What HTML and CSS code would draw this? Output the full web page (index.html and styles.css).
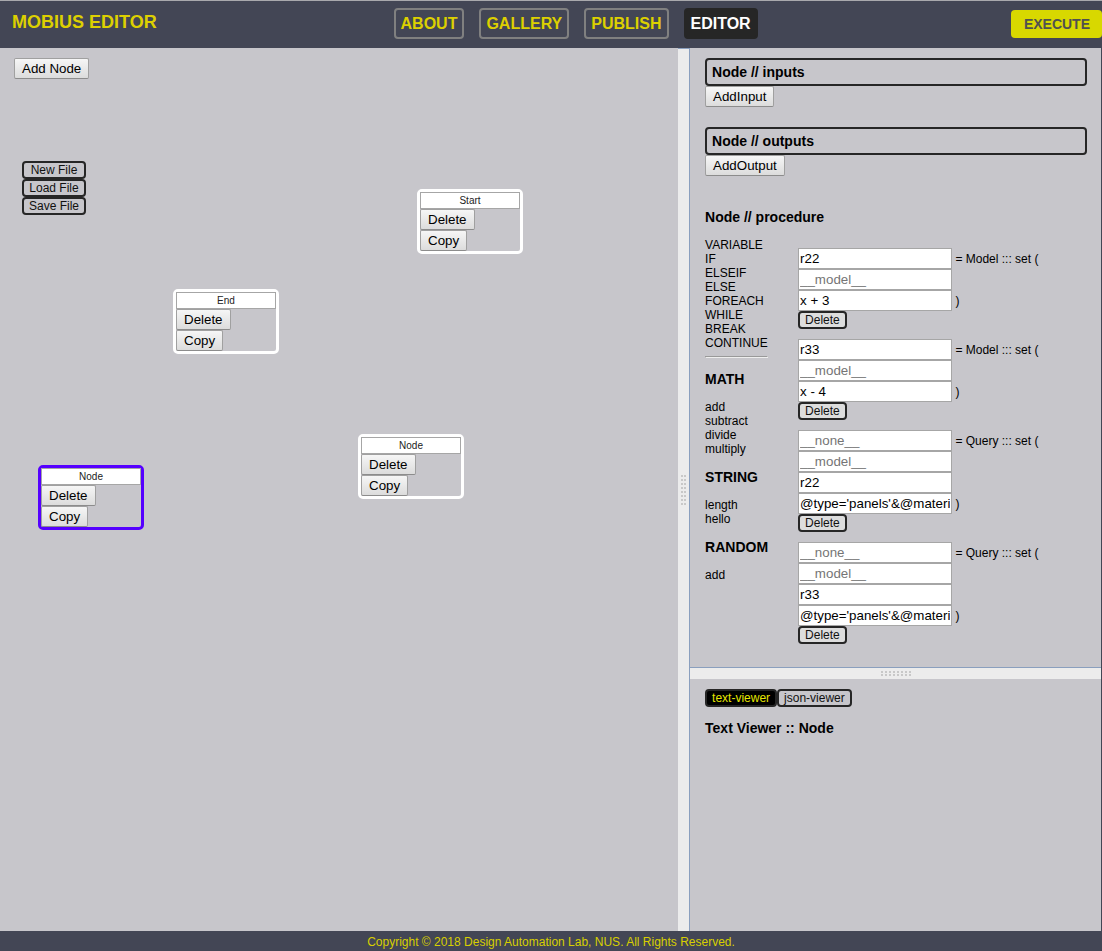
FILE: index.html
```html
<!DOCTYPE html>
<html lang="en">
<head>
<meta charset="utf-8">
<title>Mobius Editor</title>
<link rel="stylesheet" href="styles.css">
</head>
<body>
<header class="topbar">
  <h1 class="brand">MOBIUS EDITOR</h1>
  <nav class="nav">
    <a class="nav-link" href="#about">ABOUT</a>
    <a class="nav-link" href="#gallery">GALLERY</a>
    <a class="nav-link" href="#publish">PUBLISH</a>
    <a class="nav-link active" href="#editor" aria-current="page">EDITOR</a>
  </nav>
  <button class="execute" type="button">EXECUTE</button>
</header>

<main class="workspace">
  <section class="canvas" aria-label="Flowchart">
    <button class="btn" type="button">Add Node</button>
    <div class="file-menu">
      <button class="btn-outline" type="button">New File</button>
      <button class="btn-outline" type="button">Load File</button>
      <button class="btn-outline" type="button">Save File</button>
    </div>
    <article class="node node-start">
      <input class="node-name" type="text" value="Start" aria-label="Node name">
      <button class="btn" type="button">Delete</button>
      <button class="btn" type="button">Copy</button>
    </article>
    <article class="node node-end">
      <input class="node-name" type="text" value="End" aria-label="Node name">
      <button class="btn" type="button">Delete</button>
      <button class="btn" type="button">Copy</button>
    </article>
    <article class="node node-middle">
      <input class="node-name" type="text" value="Node" aria-label="Node name">
      <button class="btn" type="button">Delete</button>
      <button class="btn" type="button">Copy</button>
    </article>
    <article class="node node-selected">
      <input class="node-name" type="text" value="Node" aria-label="Node name">
      <button class="btn" type="button">Delete</button>
      <button class="btn" type="button">Copy</button>
    </article>
  </section>

  <div class="gutter gutter-vertical" role="separator" aria-orientation="vertical">
    <svg width="5" height="30" viewBox="0 0 5 30" aria-hidden="true">
      <path class="grip" d="M0 1H2M3 1H5M0 5H2M3 5H5M0 9H2M3 9H5M0 13H2M3 13H5M0 17H2M3 17H5M0 21H2M3 21H5M0 25H2M3 25H5M0 29H2M3 29H5"/>
    </svg>
  </div>

  <div class="side">
    <section class="panel">
      <h2 class="heading boxed">Node // inputs</h2>
      <button class="btn" type="button">AddInput</button>
      <h2 class="heading boxed outputs">Node // outputs</h2>
      <button class="btn" type="button">AddOutput</button>
      <h2 class="heading procedure-title">Node // procedure</h2>
      <div class="procedure">
        <div class="toolbox">
          <ul class="list">
            <li>VARIABLE</li><li>IF</li><li>ELSEIF</li><li>ELSE</li>
            <li>FOREACH</li><li>WHILE</li><li>BREAK</li><li>CONTINUE</li>
          </ul>
          <hr class="rule">
          <h3 class="heading group">MATH</h3>
          <ul class="list"><li>add</li><li>subtract</li><li>divide</li><li>multiply</li></ul>
          <h3 class="heading group">STRING</h3>
          <ul class="list"><li>length</li><li>hello</li></ul>
          <h3 class="heading group">RANDOM</h3>
          <ul class="list"><li>add</li></ul>
        </div>
        <div class="steps">
          <div class="step">
            <label class="row"><input class="field" type="text" value="r22"> = Model ::: set (</label>
            <input class="field" type="text" placeholder="__model__" aria-label="Model">
            <label class="row"><input class="field" type="text" value="x + 3"> )</label>
            <button class="btn-outline filled" type="button">Delete</button>
          </div>
          <div class="step">
            <label class="row"><input class="field" type="text" value="r33"> = Model ::: set (</label>
            <input class="field" type="text" placeholder="__model__" aria-label="Model">
            <label class="row"><input class="field" type="text" value="x - 4"> )</label>
            <button class="btn-outline filled" type="button">Delete</button>
          </div>
          <div class="step">
            <label class="row"><input class="field" type="text" placeholder="__none__"> = Query ::: set (</label>
            <input class="field" type="text" placeholder="__model__" aria-label="Model">
            <input class="field" type="text" value="r22" aria-label="Source">
            <label class="row"><input class="field" type="text" value="@type='panels'&amp;@material"> )</label>
            <button class="btn-outline filled" type="button">Delete</button>
          </div>
          <div class="step">
            <label class="row"><input class="field" type="text" placeholder="__none__"> = Query ::: set (</label>
            <input class="field" type="text" placeholder="__model__" aria-label="Model">
            <input class="field" type="text" value="r33" aria-label="Source">
            <label class="row"><input class="field" type="text" value="@type='panels'&amp;@material"> )</label>
            <button class="btn-outline filled" type="button">Delete</button>
          </div>
        </div>
      </div>
    </section>

    <div class="gutter gutter-horizontal" role="separator" aria-orientation="horizontal">
      <svg width="30" height="5" viewBox="0 0 30 5" aria-hidden="true">
        <path class="grip" d="M1 0V2M1 3V5M5 0V2M5 3V5M9 0V2M9 3V5M13 0V2M13 3V5M17 0V2M17 3V5M21 0V2M21 3V5M25 0V2M25 3V5M29 0V2M29 3V5"/>
      </svg>
    </div>

    <section class="panel">
      <div class="tabs">
        <button class="btn-outline selected" type="button">text-viewer</button>
        <button class="btn-outline" type="button">json-viewer</button>
      </div>
      <h2 class="heading viewer-title">Text Viewer :: Node</h2>
    </section>
  </div>
</main>

<footer class="footer">Copyright © 2018 Design Automation Lab, NUS. All Rights Reserved.</footer>
</body>
</html>
```

FILE: styles.css
```css
* {
  box-sizing: border-box;
}

body {
  margin: 0;
  min-height: 100vh;
  display: flex;
  flex-direction: column;
  background: #434655;
  color: #000;
  font-family: "Liberation Sans", Arial, sans-serif;
  font-size: 12px;
  line-height: 14px;
}

button,
input {
  font-family: inherit;
  margin: 0;
}

/* Header */
.topbar {
  display: grid;
  grid-template-columns: 8fr auto 7fr;
  align-items: center;
  height: 48px;
  padding-bottom: 2px;
  border-top: 1px solid #a9a9ad;
}

.brand {
  margin: 0;
  padding: 0 12px 3px;
  font-size: 18px;
  line-height: 20px;
  color: #ddd000;
}

.nav {
  display: flex;
  gap: 15px;
}

.nav-link {
  padding: 4px 5px;
  border: 2px solid #808080;
  border-radius: 4px;
  font-size: 16px;
  font-weight: bold;
  line-height: 19px;
  color: #ddd000;
  text-decoration: none;
}

.nav-link.active {
  border-color: #262626;
  background: #262626;
  color: #fff;
}

.execute {
  justify-self: end;
  height: 28px;
  padding: 0 12px 0 13px;
  border: 0;
  border-radius: 4px;
  background: #d8d800;
  color: #505050;
  font-size: 14px;
  font-weight: bold;
}

/* Layout */
.workspace {
  flex: 1;
  display: grid;
  grid-template-columns: 33fr 12px 20fr;
  margin-right: 1px;
  background: #c7c6cb;
}

.side {
  display: grid;
  grid-template-rows: 27fr 12px 11fr;
  min-width: 0;
}

.gutter {
  display: flex;
  align-items: center;
  justify-content: center;
  background: #ececec;
  border: 0 solid #8a9fbe;
}

.gutter-vertical {
  border-width: 1px 1px 0 0;
}

.gutter-horizontal {
  border-top-width: 1px;
}

.grip {
  stroke: #c8c8c8;
  stroke-width: 2;
}

/* Buttons */
.btn {
  display: block;
  height: 21px;
  padding: 0 7px;
  border: 1px solid #a0a0a0;
  border-bottom-color: #8c8c8c;
  border-radius: 2px;
  background: linear-gradient(#f6f6f6, #dcdcdc);
  color: #000;
}

.btn-outline {
  display: block;
  height: 18px;
  padding: 0 5px;
  border: 2px solid #262626;
  border-radius: 4px;
  background: transparent;
  color: #111;
  font-size: 12px;
  line-height: 14px;
  white-space: nowrap;
}

.btn-outline.filled {
  background: #ddd;
}

.btn-outline.selected {
  background: #000;
  color: #e6e600;
}

/* Flowchart */
.canvas {
  position: relative;
  padding: 10px 14px;
}

.file-menu {
  display: grid;
  width: 64px;
  margin: 82px 0 0 8px;
}

.node {
  position: absolute;
  width: 106px;
  border: 3px solid #fff;
  border-radius: 5px;
}

.node-name {
  display: block;
  width: 100%;
  height: 17px;
  padding: 0;
  border: 1px solid #a6a6a6;
  background: #fff;
  color: #222;
  font-size: 10px;
  text-align: center;
}

.node-start {
  left: 417px;
  top: 141px;
}

.node-end {
  left: 173px;
  top: 241px;
}

.node-middle {
  left: 358px;
  top: 386px;
}

.node-selected {
  left: 38px;
  top: 417px;
  border-color: #5500ff;
}

/* Side panels */
.panel {
  padding: 10px 14px 10px 15px;
}

.heading {
  margin: 0;
  font-size: 14px;
  line-height: 16px;
}

.boxed {
  padding: 4px 5px;
  border: 2px solid #262626;
  border-radius: 4px;
}

.outputs {
  margin-top: 20px;
}

.procedure-title {
  margin: 33px 0 13px;
}

.procedure {
  display: flex;
  align-items: flex-start;
  gap: 30px;
}

.list {
  margin: 0;
  padding: 0;
  list-style: none;
}

.rule {
  margin: 6px 0 13px;
  border: 1px solid;
  border-color: #999 #eee #eee #999;
}

.group {
  margin: 13px 0;
}

.steps {
  display: grid;
  gap: 10px;
  padding-top: 10px;
}

.row {
  display: flex;
  align-items: center;
  white-space: pre;
}

.field {
  display: block;
  width: 154px;
  height: 21px;
  padding: 1px;
  border: 1px solid #a6a6a6;
  background: #fff;
  color: #000;
}

.field::placeholder {
  color: #757575;
}

.tabs {
  display: flex;
}

.viewer-title {
  margin-top: 13px;
}

/* Footer */
.footer {
  padding: 4px 0 2px;
  text-align: center;
  color: #d8cf00;
}
```
